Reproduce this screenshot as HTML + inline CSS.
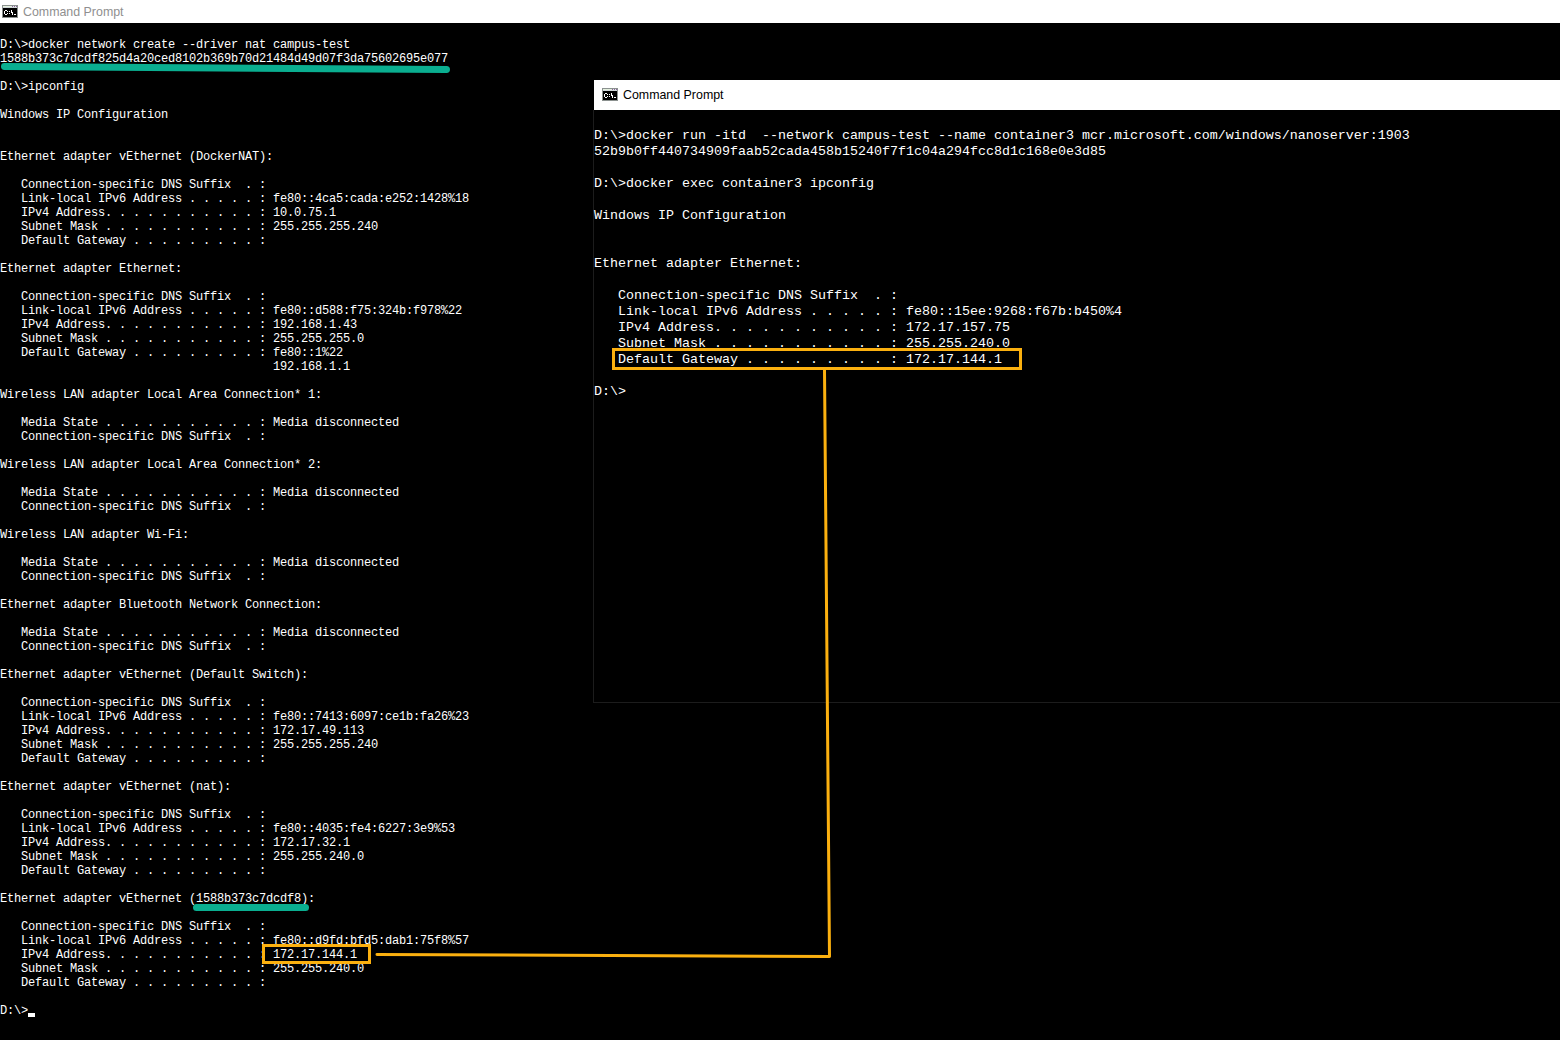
<!DOCTYPE html>
<html><head><meta charset="utf-8"><style>
*{margin:0;padding:0;box-sizing:border-box}
html,body{width:1560px;height:1040px;overflow:hidden;background:#000}
body{position:relative}
pre{position:absolute;font-family:"Liberation Mono",monospace;color:#ffffff;white-space:pre}
#lt{left:0;top:24px;font-size:12.0px;line-height:14px;letter-spacing:-0.2px}
#rt{left:594px;top:111.5px;font-size:13.33px;line-height:16px;letter-spacing:0.0px}
.tb{position:absolute;background:#fff}
#ltb{left:0;top:0;width:1560px;height:23px}
#rtb{left:594px;top:80px;width:966px;height:30px}
#rwin{position:absolute;left:593px;top:110px;width:967px;height:593px;border-left:1px solid #1c1c1c;border-bottom:1px solid #1c1c1c;background:#000}
.ttl{position:absolute;white-space:nowrap;font-family:"Liberation Sans",sans-serif;font-size:12.4px;line-height:14px}
#lttl{left:23px;top:5px;color:#8f8f8f}
#rttl{left:623px;top:88px;color:#000}
svg{position:absolute;left:0;top:0}
#cur{position:absolute;left:28px;top:1013px;width:7px;height:4px;background:#fff}
</style></head><body>
<div class="tb" id="ltb"></div>
<div class="ttl" id="lttl">Command Prompt</div>
<pre id="lt">

D:\&gt;docker network create --driver nat campus-test
1588b373c7dcdf825d4a20ced8102b369b70d21484d49d07f3da75602695e077

D:\&gt;ipconfig

Windows IP Configuration


Ethernet adapter vEthernet (DockerNAT):

   Connection-specific DNS Suffix  . :
   Link-local IPv6 Address . . . . . : fe80::4ca5:cada:e252:1428%18
   IPv4 Address. . . . . . . . . . . : 10.0.75.1
   Subnet Mask . . . . . . . . . . . : 255.255.255.240
   Default Gateway . . . . . . . . . :

Ethernet adapter Ethernet:

   Connection-specific DNS Suffix  . :
   Link-local IPv6 Address . . . . . : fe80::d588:f75:324b:f978%22
   IPv4 Address. . . . . . . . . . . : 192.168.1.43
   Subnet Mask . . . . . . . . . . . : 255.255.255.0
   Default Gateway . . . . . . . . . : fe80::1%22
                                       192.168.1.1

Wireless LAN adapter Local Area Connection* 1:

   Media State . . . . . . . . . . . : Media disconnected
   Connection-specific DNS Suffix  . :

Wireless LAN adapter Local Area Connection* 2:

   Media State . . . . . . . . . . . : Media disconnected
   Connection-specific DNS Suffix  . :

Wireless LAN adapter Wi-Fi:

   Media State . . . . . . . . . . . : Media disconnected
   Connection-specific DNS Suffix  . :

Ethernet adapter Bluetooth Network Connection:

   Media State . . . . . . . . . . . : Media disconnected
   Connection-specific DNS Suffix  . :

Ethernet adapter vEthernet (Default Switch):

   Connection-specific DNS Suffix  . :
   Link-local IPv6 Address . . . . . : fe80::7413:6097:ce1b:fa26%23
   IPv4 Address. . . . . . . . . . . : 172.17.49.113
   Subnet Mask . . . . . . . . . . . : 255.255.255.240
   Default Gateway . . . . . . . . . :

Ethernet adapter vEthernet (nat):

   Connection-specific DNS Suffix  . :
   Link-local IPv6 Address . . . . . : fe80::4035:fe4:6227:3e9%53
   IPv4 Address. . . . . . . . . . . : 172.17.32.1
   Subnet Mask . . . . . . . . . . . : 255.255.240.0
   Default Gateway . . . . . . . . . :

Ethernet adapter vEthernet (1588b373c7dcdf8):

   Connection-specific DNS Suffix  . :
   Link-local IPv6 Address . . . . . : fe80::d9fd:bfd5:dab1:75f8%57
   IPv4 Address. . . . . . . . . . . : 172.17.144.1
   Subnet Mask . . . . . . . . . . . : 255.255.240.0
   Default Gateway . . . . . . . . . :

D:\&gt;</pre>
<div id="cur"></div>
<div id="rwin"></div>
<div class="tb" id="rtb"></div>
<div class="ttl" id="rttl">Command Prompt</div>
<pre id="rt">

D:\&gt;docker run -itd  --network campus-test --name container3 mcr.microsoft.com/windows/nanoserver:1903
52b9b0ff440734909faab52cada458b15240f7f1c04a294fcc8d1c168e0e3d85

D:\&gt;docker exec container3 ipconfig

Windows IP Configuration


Ethernet adapter Ethernet:

   Connection-specific DNS Suffix  . :
   Link-local IPv6 Address . . . . . : fe80::15ee:9268:f67b:b450%4
   IPv4 Address. . . . . . . . . . . : 172.17.157.75
   Subnet Mask . . . . . . . . . . . : 255.255.240.0
   Default Gateway . . . . . . . . . : 172.17.144.1

D:\&gt;</pre>
<svg width="1560" height="1040" viewBox="0 0 1560 1040">
<g shape-rendering="crispEdges"><rect x="2" y="5" width="16" height="13" fill="#8b918f"/><rect x="3" y="8" width="14" height="9" fill="#000"/><rect x="3" y="6" width="14" height="1" fill="#e4f0de"/><rect x="3" y="7" width="14" height="1" fill="#cfd6d8"/><rect x="12" y="6" width="1" height="1" fill="#8a62a2"/><rect x="14" y="6" width="1" height="1" fill="#8a62a2"/><rect x="16" y="6" width="1" height="1" fill="#8a62a2"/><rect x="4" y="11" width="1" height="1" fill="#ffffff"/><rect x="4" y="12" width="1" height="1" fill="#ffffff"/><rect x="4" y="13" width="1" height="1" fill="#ffffff"/><rect x="5" y="10" width="1" height="1" fill="#ffffff"/><rect x="6" y="10" width="1" height="1" fill="#ffffff"/><rect x="5" y="14" width="1" height="1" fill="#ffffff"/><rect x="6" y="14" width="1" height="1" fill="#ffffff"/><rect x="7" y="11" width="1" height="1" fill="#ffffff"/><rect x="7" y="13" width="1" height="1" fill="#ffffff"/><rect x="9" y="11" width="1" height="1" fill="#ffffff"/><rect x="9" y="13" width="1" height="1" fill="#ffffff"/><rect x="11" y="10" width="1" height="1" fill="#ffffff"/><rect x="11" y="11" width="1" height="1" fill="#ffffff"/><rect x="11" y="12" width="1" height="1" fill="#ffffff"/><rect x="12" y="12" width="1" height="1" fill="#ffffff"/><rect x="12" y="13" width="1" height="1" fill="#ffffff"/><rect x="12" y="14" width="1" height="1" fill="#ffffff"/><rect x="14" y="14" width="1" height="1" fill="#ffffff"/><rect x="15" y="14" width="1" height="1" fill="#ffffff"/><rect x="602" y="88" width="16" height="13" fill="#8b918f"/><rect x="603" y="91" width="14" height="9" fill="#000"/><rect x="603" y="89" width="14" height="1" fill="#e4f0de"/><rect x="603" y="90" width="14" height="1" fill="#cfd6d8"/><rect x="612" y="89" width="1" height="1" fill="#8a62a2"/><rect x="614" y="89" width="1" height="1" fill="#8a62a2"/><rect x="616" y="89" width="1" height="1" fill="#8a62a2"/><rect x="604" y="94" width="1" height="1" fill="#ffffff"/><rect x="604" y="95" width="1" height="1" fill="#ffffff"/><rect x="604" y="96" width="1" height="1" fill="#ffffff"/><rect x="605" y="93" width="1" height="1" fill="#ffffff"/><rect x="606" y="93" width="1" height="1" fill="#ffffff"/><rect x="605" y="97" width="1" height="1" fill="#ffffff"/><rect x="606" y="97" width="1" height="1" fill="#ffffff"/><rect x="607" y="94" width="1" height="1" fill="#ffffff"/><rect x="607" y="96" width="1" height="1" fill="#ffffff"/><rect x="609" y="94" width="1" height="1" fill="#ffffff"/><rect x="609" y="96" width="1" height="1" fill="#ffffff"/><rect x="611" y="93" width="1" height="1" fill="#ffffff"/><rect x="611" y="94" width="1" height="1" fill="#ffffff"/><rect x="611" y="95" width="1" height="1" fill="#ffffff"/><rect x="612" y="95" width="1" height="1" fill="#ffffff"/><rect x="612" y="96" width="1" height="1" fill="#ffffff"/><rect x="612" y="97" width="1" height="1" fill="#ffffff"/><rect x="614" y="97" width="1" height="1" fill="#ffffff"/><rect x="615" y="97" width="1" height="1" fill="#ffffff"/></g>
<g fill="none" stroke="#fbb00f" stroke-width="3">
<rect x="613.5" y="349.5" width="407" height="19"/>
<rect x="263.5" y="945.5" width="106" height="17"/>
</g>
<polyline points="824.5,370 829.5,956.5 377,954.5" fill="none" stroke="#fbb00f" stroke-width="3" stroke-linecap="round" stroke-linejoin="round"/>
<g stroke="#0aae90" stroke-width="7" stroke-linecap="round">
<line x1="4.5" y1="66.5" x2="446.5" y2="69.5"/>
<line x1="196.5" y1="907.5" x2="305.5" y2="907.5"/>
</g>
</svg>
</body></html>
